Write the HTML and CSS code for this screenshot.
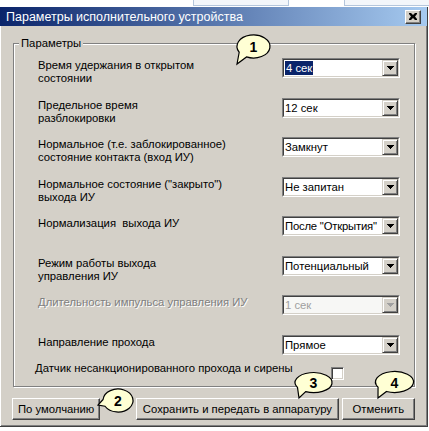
FILE: index.html
```html
<!doctype html>
<html lang="ru">
  <head>
    <meta charset="utf-8">
    <title>Параметры исполнительного устройства</title>
    <link rel="stylesheet" href="styles.css">
  </head>
  <body>
    <div class="backdrop">
      <span class="tab tab-a"></span>
      <span class="tab tab-b"></span>
    </div>

    <div class="window">
      <div class="titlebar">
        <span class="title">Параметры исполнительного устройства</span>
        <span class="close">
          <svg width="8" height="7" viewBox="0 0 8 7"><path d="M0 0h2l2 2 2-2h2v1L6 3.5 8 6v1H6L4 5 2 7H0V6l2-2.5L0 1z" fill="#000"/></svg>
        </span>
      </div>

      <div class="client">
        <div class="group">
          <span class="group-title">Параметры</span>

          <div class="rows">
            <div class="label">Время удержания в открытом<br>состоянии</div>
            <div class="combo"><div class="combo-in"><span class="value"><span class="selected">4 сек</span></span><span class="arrow"><svg width="7" height="4"><path d="M0 0h7v1H0zM1 1h5v1H1zM2 2h3v1H2zM3 3h1v1H3z"/></svg></span></div></div>

            <div class="label">Предельное время<br>разблокировки</div>
            <div class="combo"><div class="combo-in"><span class="value">12 сек</span><span class="arrow"><svg width="7" height="4"><path d="M0 0h7v1H0zM1 1h5v1H1zM2 2h3v1H2zM3 3h1v1H3z"/></svg></span></div></div>

            <div class="label">Нормальное (т.е. заблокированное)<br>состояние контакта (вход ИУ)</div>
            <div class="combo"><div class="combo-in"><span class="value">Замкнут</span><span class="arrow"><svg width="7" height="4"><path d="M0 0h7v1H0zM1 1h5v1H1zM2 2h3v1H2zM3 3h1v1H3z"/></svg></span></div></div>

            <div class="label">Нормальное состояние ("закрыто")<br>выхода ИУ</div>
            <div class="combo"><div class="combo-in"><span class="value">Не запитан</span><span class="arrow"><svg width="7" height="4"><path d="M0 0h7v1H0zM1 1h5v1H1zM2 2h3v1H2zM3 3h1v1H3z"/></svg></span></div></div>

            <div class="label">Нормализация&nbsp; выхода ИУ</div>
            <div class="combo"><div class="combo-in"><span class="value tight">После "Открытия"</span><span class="arrow"><svg width="7" height="4"><path d="M0 0h7v1H0zM1 1h5v1H1zM2 2h3v1H2zM3 3h1v1H3z"/></svg></span></div></div>

            <div class="label">Режим работы выхода<br>управления ИУ</div>
            <div class="combo"><div class="combo-in"><span class="value">Потенциальный</span><span class="arrow"><svg width="7" height="4"><path d="M0 0h7v1H0zM1 1h5v1H1zM2 2h3v1H2zM3 3h1v1H3z"/></svg></span></div></div>

            <div class="label disabled">Длительность импульса управления ИУ</div>
            <div class="combo disabled"><div class="combo-in"><span class="value">1 сек</span><span class="arrow"><svg width="7" height="4"><path d="M0 0h7v1H0zM1 1h5v1H1zM2 2h3v1H2zM3 3h1v1H3z"/></svg></span></div></div>

            <div class="label">Направление прохода</div>
            <div class="combo"><div class="combo-in"><span class="value">Прямое</span><span class="arrow"><svg width="7" height="4"><path d="M0 0h7v1H0zM1 1h5v1H1zM2 2h3v1H2zM3 3h1v1H3z"/></svg></span></div></div>
          </div>

          <div class="check-row">
            <span class="check-label">Датчик несанкционированного прохода и сирены</span>
            <span class="checkbox"></span>
          </div>
        </div>

        <div class="buttons">
          <button class="btn btn-default">По умолчанию</button>
          <button class="btn btn-save">Сохранить и передать в аппаратуру</button>
          <button class="btn btn-cancel">Отменить</button>
        </div>
      </div>
    </div>

    <!-- numbered callouts drawn over the dialog -->
    <svg class="callouts" width="429" height="431" viewBox="0 0 429 431">
      <g class="bubble">
        <path d="M239.2 52.25L237 64L246.5 56.9A16.5 11.5 0 1 0 239.2 52.25Z"/>
        <text x="253.5" y="47">1</text>
      </g>
      <g class="bubble">
        <path d="M103.06 399.5L98 405L105 406.25A15 11.5 0 1 0 103.06 399.5Z"/>
        <text x="118" y="401">2</text>
      </g>
      <g class="bubble">
        <path d="M297.5 387.5L299 398L305.7 391.6A18.5 10 0 1 0 297.5 387.5Z"/>
        <text x="313.5" y="383">3</text>
      </g>
      <g class="bubble">
        <path d="M378.05 387.25L378 398L386.47 391.52A19 10.5 0 1 0 378.05 387.25Z"/>
        <text x="394.5" y="382.5">4</text>
      </g>
    </svg>
  </body>
</html>
```

FILE: styles.css
```css
body
{
    margin: 0;
    width: 429px;
    height: 431px;
    overflow: hidden;
    position: relative;
    background: #fff;
    font-family: "Liberation Sans", Arial, sans-serif;
    font-size: 11.3px;
    color: #000;
}

/* bits of the window behind the dialog */
.backdrop
{
    height: 7px;
    display: flex;
    align-items: flex-start;
    padding-left: 193px;
    gap: 55px;
}

.tab
{
    height: 5px;
    border: 1px solid #b4c6dc;
    border-top: 0;
    background: #f3f6fa;
}

.tab-a { width: 94px; }
.tab-b { flex: 1; border-right: 0; }

.window
{
    width: 428px;
    height: 420px;
    box-sizing: border-box;
    display: flex;
    flex-direction: column;
    background: #d4d0c8;
    border-right: 1px solid #404040;
    border-bottom: 1px solid #404040;
    box-shadow: inset 1px 0 #fff, inset -1px -1px #808080;
}

.titlebar
{
    height: 19px;
    flex: none;
    display: flex;
    align-items: center;
    justify-content: space-between;
    padding: 0 6px 0 6px;
    background: linear-gradient(to right, #0a246a, #a6caf0);
    color: #fff;
    font-size: 12.5px;
}

.close
{
    width: 16px;
    height: 14px;
    box-sizing: border-box;
    display: flex;
    align-items: center;
    justify-content: center;
    background: #d4d0c8;
    border: 1px solid;
    border-color: #fff #404040 #404040 #fff;
    box-shadow: inset -1px -1px #808080;
}

.client
{
    flex: 1;
    display: flex;
    flex-direction: column;
    padding: 17px 12px 6px 13px;
}

.group
{
    position: relative;
    border: 1px solid #808080;
    box-shadow: inset 1px 1px #fff, 1px 1px #fff;
    padding: 14px 14px 6px 24px;
}

.group-title
{
    position: absolute;
    top: -7px;
    left: 5px;
    padding: 0 2px;
    line-height: 13px;
    background: #d4d0c8;
}

.rows
{
    display: grid;
    grid-template-columns: 1fr 118px;
    grid-template-rows: repeat(7, 39.5px) 20px;
    align-items: start;
}

.label
{
    line-height: 13px;
    padding-top: 1px;
    white-space: nowrap;
}

.label.disabled
{
    color: #808080;
    text-shadow: 1px 1px #fff;
}

.combo
{
    height: 20px;
    box-sizing: border-box;
    border: 1px solid;
    border-color: #808080 #fff #fff #808080;
}

.combo-in
{
    height: 100%;
    box-sizing: border-box;
    display: flex;
    border: 1px solid;
    border-color: #404040 #d4d0c8 #d4d0c8 #404040;
    background: #fff;
}

.value
{
    flex: 1;
    display: flex;
    align-items: center;
    padding-left: 1px;
    white-space: nowrap;
    overflow: hidden;
}

.value.tight { letter-spacing: -0.2px; }

.selected
{
    background: #0a246a;
    color: #fff;
    padding: 0 1px;
    line-height: 14px;
}

.arrow
{
    flex: none;
    width: 16px;
    height: 16px;
    box-sizing: border-box;
    display: flex;
    align-items: center;
    justify-content: center;
    background: #d4d0c8;
    border: 1px solid;
    border-color: #d4d0c8 #404040 #404040 #d4d0c8;
    box-shadow: inset 1px 1px #fff, inset -1px -1px #808080;
}

.arrow svg { fill: #000; }

.combo.disabled .combo-in { background: #f7f7f5; }
.combo.disabled .value { color: #a0a0a0; }
.combo.disabled .arrow svg { fill: #a0a0a0; }

.check-row
{
    display: flex;
    align-items: flex-start;
    margin: 7.5px 56px 0 -3px;
}

.check-label
{
    line-height: 13px;
    white-space: nowrap;
}

.checkbox
{
    margin-left: auto;
    margin-top: 5px;
    width: 13px;
    height: 13px;
    box-sizing: border-box;
    background: #fff;
    border: 1px solid;
    border-color: #808080 #fff #fff #808080;
    box-shadow: inset 1px 1px #404040, inset -1px -1px #d4d0c8;
}

.buttons
{
    display: flex;
    margin-top: 11px;
}

.btn
{
    height: 22px;
    box-sizing: border-box;
    padding: 0;
    font: inherit;
    color: #000;
    background: #d4d0c8;
    border: 1px solid;
    border-color: #fff #404040 #404040 #fff;
    box-shadow: inset -1px -1px #808080;
    white-space: nowrap;
}

.btn-default { width: 89px; margin-left: -1px; }
.btn-save { width: 204px; margin-left: 36px; }
.btn-cancel { width: 74px; margin-left: 3px; }

.callouts
{
    position: absolute;
    top: 0;
    left: 0;
    pointer-events: none;
}

.bubble path
{
    fill: #ffffd4;
    stroke: #000;
    stroke-width: 1.2;
}

.bubble text
{
    font-family: "Liberation Sans", sans-serif;
    font-weight: bold;
    font-size: 14px;
    text-anchor: middle;
    dominant-baseline: central;
}
```
